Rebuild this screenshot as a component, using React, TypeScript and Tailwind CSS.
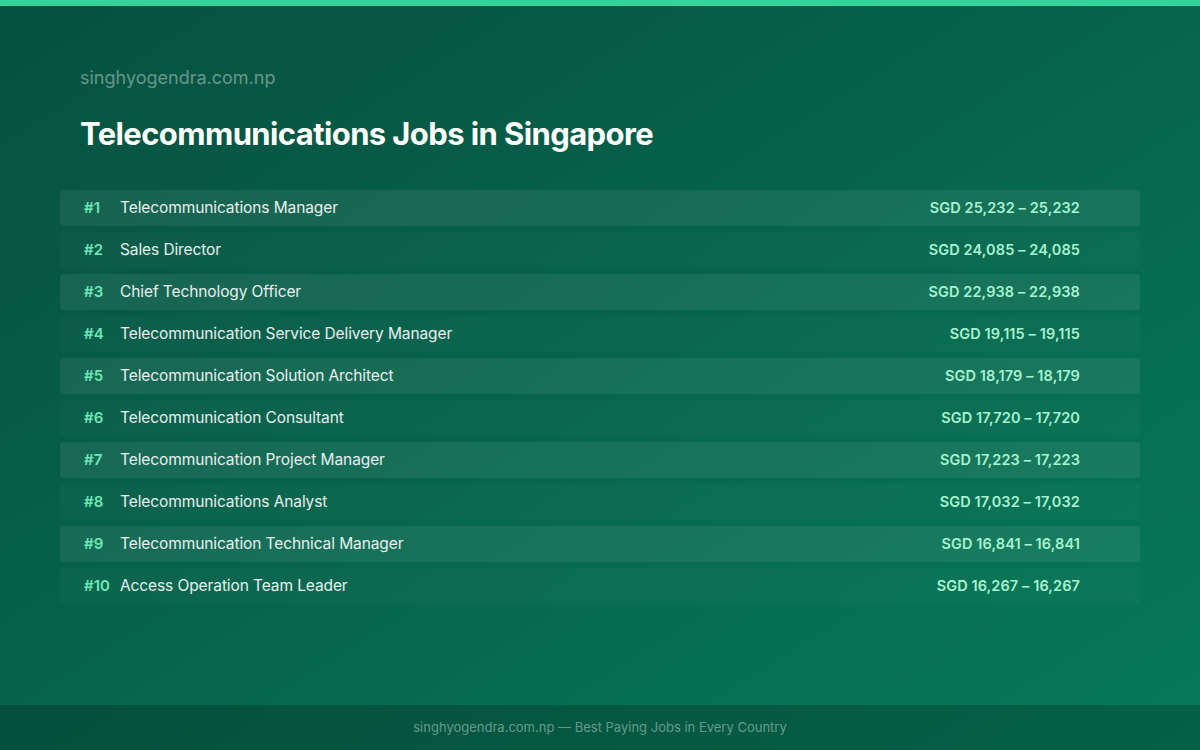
const jobs: [string, string][] = [
  ['Telecommunications Manager', 'SGD 25,232 – 25,232'],
  ['Sales Director', 'SGD 24,085 – 24,085'],
  ['Chief Technology Officer', 'SGD 22,938 – 22,938'],
  ['Telecommunication Service Delivery Manager', 'SGD 19,115 – 19,115'],
  ['Telecommunication Solution Architect', 'SGD 18,179 – 18,179'],
  ['Telecommunication Consultant', 'SGD 17,720 – 17,720'],
  ['Telecommunication Project Manager', 'SGD 17,223 – 17,223'],
  ['Telecommunications Analyst', 'SGD 17,032 – 17,032'],
  ['Telecommunication Technical Manager', 'SGD 16,841 – 16,841'],
  ['Access Operation Team Leader', 'SGD 16,267 – 16,267'],
];

export default function App() {
  return (
    <div
      className="w-[1200px] h-[750px] flex flex-col bg-gradient-to-br from-[#06503f] to-[#067a58] overflow-hidden"
      style={{ fontFamily: 'Inter, "Noto Sans", sans-serif' }}
    >
      <div className="h-[6px] bg-[#34d399] shrink-0" />
      <div className="flex-1 flex flex-col px-[60px]">
        <div className="pl-5 pt-[59px] text-[18px] leading-[26px] text-white/40">singhyogendra.com.np</div>
        <h1 className="pl-5 mt-[23px] text-[31px] leading-[40px] font-bold text-white tracking-[-0.6px]">
          Telecommunications Jobs in Singapore
        </h1>
        <div className="mt-[36px] flex flex-col gap-[6px]">
          {jobs.map(([title, pay], i) => (
            <div
              key={i}
              className={`h-[36px] rounded-[4px] flex items-center pl-6 pr-[60px] ${i % 2 === 0 ? 'bg-white/[0.07]' : 'bg-white/[0.025]'}`}
            >
              <span className="w-[36px] text-[15px] font-semibold text-[#6ee7b7]">#{i + 1}</span>
              <span className="flex-1 text-[15.5px] tracking-[-0.1px] text-white/90">{title}</span>
              <span className="text-[14.5px] tracking-[0.1px] font-semibold text-[#a7f3d0]">{pay}</span>
            </div>
          ))}
        </div>
      </div>
      <div className="h-[45px] shrink-0 bg-black/20 flex items-center justify-center text-[13px] text-white/40">
        singhyogendra.com.np — Best Paying Jobs in Every Country
      </div>
    </div>
  );
}
